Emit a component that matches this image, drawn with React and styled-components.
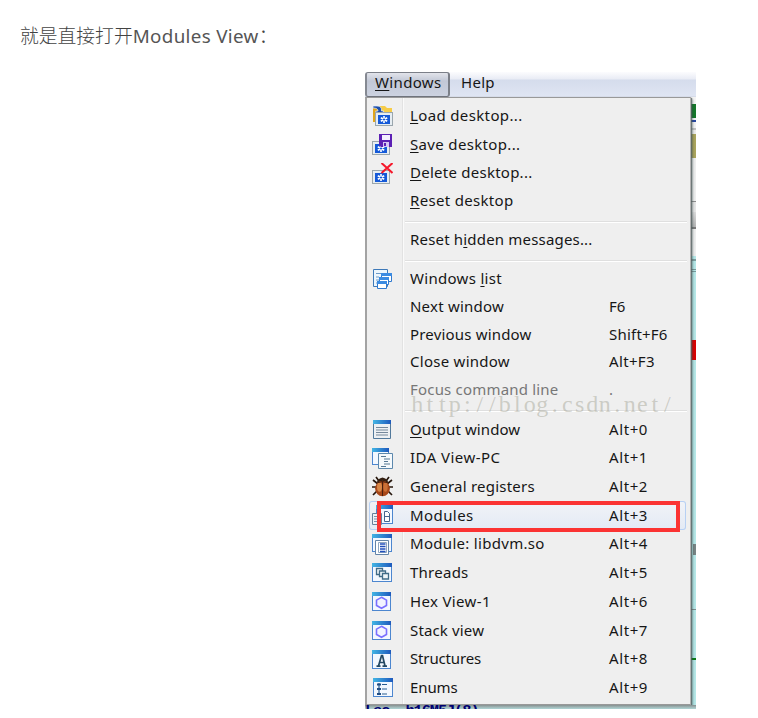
import React from "react";
import styled, { createGlobalStyle, css } from "styled-components";

const GlobalStyle = createGlobalStyle`
  body { margin: 0; background: #fff; overflow: hidden; }
`;

const Page = styled.main`
  width: 758px;
  height: 718px;
  overflow: hidden;
  background: #fff;
`;

const Intro = styled.p`
  margin: 0;
  height: 72px;
  box-sizing: border-box;
  padding: 22px 0 0 20px;
  font: 300 18.8px/28px "Noto Sans", "Noto Sans CJK SC", sans-serif;
  color: #424242;
  white-space: nowrap;
`;

const IntroLatin = styled.span`
  font-size: 18.8px;
  font-weight: 400;
  letter-spacing: 0.33px;
  color: #555;
`;

const Shot = styled.section`
  position: relative;
  width: 331px;
  height: 637px;
  margin-left: 365px;
  overflow: hidden;
  font: 15px/20px "Noto Sans", "Open Sans", sans-serif;
  color: #161616;
  background: #b4e2e2;
`;

const MenuBar = styled.nav`
  display: flex;
  height: 25px;
  background: linear-gradient(#fcfcfe 0, #e9ecf5 7px, #d5dcec 8px, #dfe5f3 24px, #cdd3e0 25px);
`;

const BarItem = styled.div`
  box-sizing: border-box;
  height: 25px;
  padding: 0 0 0 ${(p) => (p.$open ? 8 : 11)}px;
  width: ${(p) => (p.$open ? 85 : 60)}px;
  line-height: ${(p) => (p.$open ? 19 : 21)}px;
  letter-spacing: ${(p) => p.$track}px;
  ${(p) =>
    p.$open &&
    css`
      border: 2px solid #7b7f88;
      border-top-width: 1px;
      border-bottom: 1px solid #6f737c;
      border-left-color: #858992;
      border-radius: 3px;
      background: linear-gradient(#e2e4ea, #c2c8d6 35%, #ccd2e0);
    `}
`;

const Body = styled.div`
  display: flex;
  height: 608px;
`;

const Menu = styled.div`
  position: relative;
  z-index: 1;
  box-sizing: border-box;
  width: 326px;
  height: 608px;
  padding-top: 3px;
  border: 1px solid #999;
  border-left: 2px solid #a3a3a3;
  border-right: 1px solid #b3b3b3;
  background: linear-gradient(90deg, #efefef 35px, #e2e2e2 35px, #e2e2e2 36px, #fafafa 36px, #fafafa 37px, #efefef 37px);
  box-shadow: 1px 1px 1px rgba(90, 100, 100, 0.75), 2px 2px 2px rgba(50, 70, 70, 0.4);
`;

const Row = styled.div`
  display: grid;
  grid-template-columns: 38px 199px 1fr;
  align-items: center;
  box-sizing: border-box;
  height: ${(p) => p.$h}px;
  margin-right: 4px;
  padding-left: 5px;
  white-space: nowrap;
  color: ${(p) => (p.$dim ? "#777" : "inherit")};
  ${(p) =>
    p.$hot &&
    css`
      margin-left: 2px;
      padding-left: 3px;
      border-radius: 3px;
      box-shadow: inset 0 0 0 1px #b7d0f3;
      background: linear-gradient(#f1f3f7, #e3eaf5);
    `}
`;

const Label = styled.span`
  padding-bottom: 2px;
  letter-spacing: ${(p) => p.$track}px;
`;

const Shortcut = styled(Label)``;

const Key = styled.span`
  text-decoration: underline;
  text-decoration-thickness: 1px;
  text-underline-offset: 2px;
  text-decoration-skip-ink: none;
`;

const Divider = styled.hr`
  height: 1px;
  margin: 7px 3px 4px 38px;
  border: 0;
  background: #dfdfdf;
  box-shadow: 0 1px #fff;
`;

const Icon = styled.svg`
  width: 21px;
  height: 21px;
  display: block;
`;

const Gradients = styled.svg`
  position: absolute;
  width: 0;
  height: 0;
`;

const Behind = styled.div`
  width: 5px;
  height: 612px;
  flex: none;
`;

const Band = styled.div`
  height: ${(p) => p.$h}px;
  background: ${(p) => p.$c};
`;

const Status = styled.div`
  position: relative;
  z-index: 2;
  height: 4px;
  overflow: hidden;
  background: linear-gradient(#858f8f, #9fb5b5 50%, #aed6d6);
  color: #000070;
  font: bold 15.5px/13px "Liberation Mono", monospace;
  letter-spacing: -1.2px;
  white-space: pre;
`;

const Highlight = styled.div`
  position: absolute;
  z-index: 2;
  box-sizing: border-box;
  left: 12px;
  top: 429px;
  width: 303px;
  height: 31px;
  border: 4px solid #fb3333;
`;

const Watermark = styled.div`
  position: absolute;
  z-index: 2;
  left: 46px;
  top: 318px;
  display: flex;
  font: 24px/28px "Liberation Serif", serif;
  color: rgba(160, 160, 145, 0.45);
`;

const Cell = styled.span`
  width: 12.5px;
  text-align: center;
`;

const Frame = ({ x = 1, y = 1, w = 18, h = 18 }) => (
  <>
    <rect x={x + 0.5} y={y + 0.5} width={w} height={h} fill="#f3f8ff" stroke="#4c86cf" />
    <rect x={x} y={y} width={w + 1} height="4" fill="url(#bar)" />
  </>
);

const Desk = ({ x = 2, y = 7 }) => (
  <>
    <rect x={x - 0.5} y={y - 0.5} width="17" height="13" fill="#e6edf2" stroke="#9aa6ad" />
    <rect x={x + 2} y={y + 2} width="12" height="9" fill="#1459d8" />
    <path d={`M${x + 8} ${y + 3}v7M${x + 4.8} ${y + 4.7}l6.4 3.6M${x + 11.2} ${y + 4.7}l-6.4 3.6`} stroke="#fff" strokeWidth="1.6" />
    <circle cx={x + 8} cy={y + 6.5} r="1.1" fill="#1459d8" />
  </>
);

const Hexagon = () => (
  <>
    <Frame x={0} />
    <path d="M9.5 6.3l5 2.8v5.4l-5 2.8-5-2.8V9.1z" fill="#f2f4ff" stroke="#7a70ff" strokeWidth="1.6" />
  </>
);

const icons = {
  load: (
    <>
      <path d="M1 2h6l1 2h12v13H1z" fill="#e0a51b" />
      <path d="M6 1h7l2 2h5v5H6z" fill="#f6cc48" />
      <path d="M1 1h4q5 0 4.5 5H12l-4.3 5L3.5 6H6Q6 3 1 3z" fill="#1d4eaa" stroke="#e8f1ff" strokeWidth=".7" />
      <Desk x={4} y={8} />
    </>
  ),
  save: (
    <>
      <Desk x={1} y={8} />
      <path d="M7 0h13v13H9l-2-2z" fill="#5c20b4" />
      <path d="M10 1h8v5h-8z" fill="#f4efff" />
      <path d="M11 8h6v5h-6z" fill="#d6c6f3" />
      <path d="M12 9h2v3h-2z" fill="#5c20b4" />
    </>
  ),
  del: (
    <>
      <Desk x={1} y={8} />
      <path d="M9.5 0l11 10M20.5 0L9.5 10" stroke="#f5182b" strokeWidth="2" />
    </>
  ),
  list: (
    <>
      <path d="M1.5.5h14v17h-14z" fill="#edf6fd" stroke="#3e79b8" />
      <path d="M4 4.5h5M4 8h3M4 11h3M4 14h2" stroke="#6c9ac8" />
      <path d="M9.5 4.5h10v8h-10z" fill="#fff" stroke="#2f79cf" />
      <path d="M9 4h11v3H9z" fill="#3b8be2" />
      <path d="M7.5 8.5h9v7h-9z" fill="#fff" stroke="#2f79cf" />
      <path d="M7 8h10v3H7z" fill="#3b8be2" />
      <path d="M5.5 12.5h9v7h-9z" fill="#fff" stroke="#2f79cf" />
      <path d="M5 12h10v3H5z" fill="#3b8be2" />
    </>
  ),
  output: (
    <>
      <path d="M1.5 1.5h17v18h-17z" fill="#edf0f3" stroke="#52799b" />
      <path d="M1 1h18v4H1z" fill="url(#bar)" />
      <path d="M4 8.5h12M4 11h12M4 13.5h12M4 16h12" stroke="#75889b" />
    </>
  ),
  ida: (
    <>
      <Frame x={0} y={0} w={16} h={16} />
      <path d="M6.5 5.5h14v15h-14z" fill="#f5f9fc" stroke="#5c88ad" />
      <path d="M9 8.5h5M12 11h6M12 13.5h4M12 16h6M9 18.5h5" stroke="#557894" />
    </>
  ),
  bug: (
    <>
      <path d="M4 1l3 4M17 1l-3 4M1 4l5 4M20 4l-5 4M0 11h5M21 11h-5M1 19l5-5M20 19l-5-5" stroke="#27170d" strokeWidth="1.7" fill="none" />
      <path d="M5 5q5.5-7 11 0l-1 3H6z" fill="#352012" />
      <ellipse cx="10.5" cy="12.5" rx="7.4" ry="7.7" fill="#a74718" />
      <ellipse cx="7.5" cy="11" rx="2.5" ry="4.8" fill="#d88747" />
      <ellipse cx="13.5" cy="11" rx="2.2" ry="4.8" fill="#cb7137" />
      <path d="M10.5 5v15M4.5 7q6-3 12 0" stroke="#49200f" fill="none" />
    </>
  ),
  modules: (
    <>
      <Frame x={4} y={0} w={16} h={18} />
      <path d="M.5 8.5h9v11h-9z" fill="#eef2f7" stroke="#66809a" />
      <path d="M2 11.5h5M2 14h5M2 16.5h5" stroke="#7490ad" />
      <path d="M12.5 6.5h3l2 2v8h-5z" fill="#fff" stroke="#44678f" />
      <path d="M13 11.5h4" stroke="#44678f" />
    </>
  ),
  module: (
    <>
      <Frame x={0} y={0} w={19} h={17} />
      <path d="M3.5 6.5h13v14h-13z" fill="#fff" stroke="#6384a8" />
      <path d="M6.5 8.5h8v10h-8z" fill="#fff" stroke="#90a7c0" />
      <path d="M8 10h5.5M8 12.5h5.5M8 15h5.5M8 17.5h5.5" stroke="#214fba" strokeWidth="1.4" />
    </>
  ),
  threads: (
    <>
      <Frame x={0} y={1} w={19} h={18} />
      <g fill="#eff5f8" stroke="#416b87" strokeWidth="1.3">
        <path d="M4.5 6.5h6v6h-6z" />
        <path d="M7.5 9h6v5.5h-6z" />
        <path d="M10.5 11.5h6V17h-6z" />
      </g>
    </>
  ),
  hex: <Hexagon />,
  struct: (
    <>
      <Frame x={0} />
      <path d="M4.5 17.2h4M10.5 17.2h4.5M6.5 17L9.5 6.7h1L13 17M7.5 13.5h5" fill="none" stroke="#244963" strokeWidth="1.7" />
    </>
  ),
  enums: (
    <>
      <Frame x={1} y={1} w={19} h={18} />
      <path d="M7 6v12M10 7.5h5M10 12h5M10 17h5" stroke="#285c91" strokeWidth="1.2" />
      <path d="M5 6.5h4v2H5zM5 11h4v2H5zM5 16h4v2H5z" fill="#214d83" />
    </>
  ),
};

const entries = [
  { h: 29, icon: "load", text: "_Load desktop...", track: 0.36 },
  { h: 29, icon: "save", text: "_Save desktop...", track: 0.34 },
  { h: 28, icon: "del", text: "_Delete desktop...", track: 0.25 },
  { h: 27, text: "_Reset desktop", track: 0.32 },
  null,
  { h: 27, text: "Reset h_idden messages...", track: 0.18 },
  null,
  { h: 28, icon: "list", text: "Windows _list", track: 0.3 },
  { h: 28, text: "Next window", track: 0.22, keys: "F6", kt: 0 },
  { h: 27, text: "Previous window", track: 0.18, keys: "Shift+F6", kt: 0.22 },
  { h: 28, text: "Close window", track: 0.27, keys: "Alt+F3", kt: 0.35 },
  { h: 27, text: "Focus command line", track: 0.19, keys: ".", kt: 0, dim: true },
  null,
  { h: 29, icon: "output", text: "_Output window", track: 0.1, keys: "Alt+0" },
  { h: 28, icon: "ida", text: "IDA View-PC", track: 0.45, keys: "Alt+1" },
  { h: 29, icon: "bug", text: "General registers", track: 0.22, keys: "Alt+2" },
  { h: 29, icon: "modules", text: "Modules", track: 0.42, keys: "Alt+3", hot: true },
  { h: 28, icon: "module", text: "Module: libdvm.so", track: 0.3, keys: "Alt+4" },
  { h: 29, icon: "threads", text: "Threads", track: 0.25, keys: "Alt+5" },
  { h: 29, icon: "hex", text: "Hex View-1", track: 0.35, keys: "Alt+6" },
  { h: 29, icon: "hex", text: "Stack view", track: 0.15, keys: "Alt+7" },
  { h: 28, icon: "struct", text: "Structures", track: -0.15, keys: "Alt+8" },
  { h: 29, icon: "enums", text: "Enums", track: -0.1, keys: "Alt+9" },
];

const bands = [
  [7, "#f4f4f4"], [14, "#14782a"], [2, "#f0f2f5"], [2, "#2746a0"], [6, "#f1f1f1"], [2, "#c2c2c2"], [4, "#ececec"],
  [24, "#aaa45c"], [43, "#eeeeee"], [1, "#8d8d8d"], [10, "#e5e5e5"], [15, "linear-gradient(#dadada,#b4b4b4)"],
  [2, "#7b7b7b"], [27, "#eeeeee"], [3, "#b5e7e7"], [2, "#7c9fa0"], [8, "#b5e7e7"], [1, "#789a9b"], [1, "#b5e7e7"], [1, "#789a9b"],
  [68, "#b5e7e7"], [20, "#d90000"], [184, "#b5e7e7"], [11, "linear-gradient(90deg,#b5e7e7 2px,#778484 2px)"], [54, "#b5e7e7"], [1, "#7c9091"], [48, "#b5e7e7"], [2, "#087b16"], [49, "#b5e7e7"],
];

const Mnemonic = ({ text }) => {
  const i = text.indexOf("_");
  if (i < 0) return text;
  return (
    <>
      {text.slice(0, i)}
      <Key>{text[i + 1]}</Key>
      {text.slice(i + 2)}
    </>
  );
};

export default function App() {
  return (
    <Page>
      <GlobalStyle />
      <Intro>
        就是直接打开<IntroLatin>Modules View</IntroLatin>：
      </Intro>
      <Shot>
        <Gradients>
          <defs>
            <linearGradient id="bar">
              <stop offset="0" stopColor="#43b5e4" />
              <stop offset="1" stopColor="#1d59bd" />
            </linearGradient>
          </defs>
        </Gradients>
        <MenuBar>
          <BarItem $open $track={0.35}><Key>W</Key>indows</BarItem>
          <BarItem $track={0.3}>Help</BarItem>
        </MenuBar>
        <Body>
          <Menu>
            {entries.map((e, i) =>
              e ? (
                <Row key={i} $h={e.h} $dim={e.dim} $hot={e.hot}>
                  <span>{e.icon && <Icon viewBox="0 0 21 21">{icons[e.icon]}</Icon>}</span>
                  <Label $track={e.track}><Mnemonic text={e.text} /></Label>
                  <Shortcut $track={e.kt ?? 0.6}>{e.keys}</Shortcut>
                </Row>
              ) : (
                <Divider key={i} />
              )
            )}
          </Menu>
          <Behind>
            {bands.map(([h, c], i) => <Band key={i} $h={h} $c={c} />)}
          </Behind>
        </Body>
        <Status>Lec ,h16M5J(8)</Status>
        <Highlight />
        <Watermark>
          {[..."http://blog.csdn.net/"].map((c, i) => <Cell key={i}>{c}</Cell>)}
        </Watermark>
      </Shot>
    </Page>
  );
}
